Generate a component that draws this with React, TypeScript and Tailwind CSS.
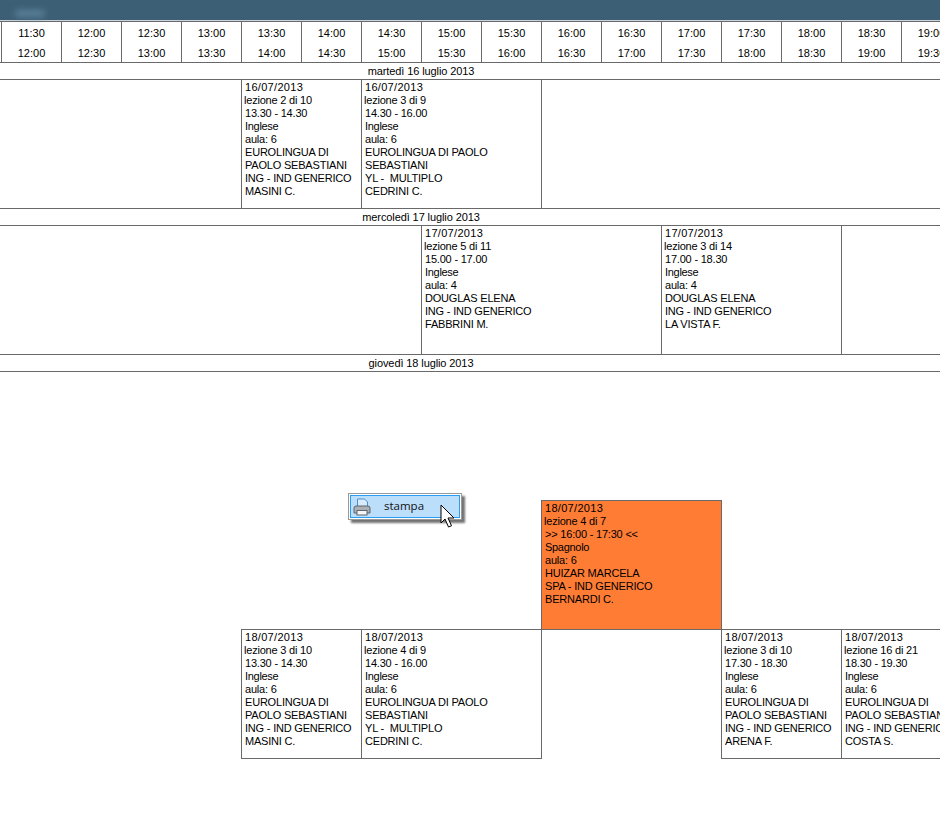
const font = { fontFamily: '"Liberation Sans", Arial, sans-serif' };

const hours = ["11:30","12:00","12:30","13:00","13:30","14:00","14:30","15:00","15:30","16:00","16:30","17:00","17:30","18:00","18:30","19:00"];
const ends = ["12:00","12:30","13:00","13:30","14:00","14:30","15:00","15:30","16:00","16:30","17:00","17:30","18:00","18:30","19:00","19:30"];

function Lines({ lines }: { lines: string[] }) {
  return (
    <>
      {lines.map((l, i) => (
        <div key={i} className={i === 0 ? "tracking-[0.3px]" : i === 1 ? "-ml-px tracking-[-0.2px]" : i === 3 ? "tracking-[-0.3px]" : "tracking-[-0.2px]"}>
          {l}
        </div>
      ))}
    </>
  );
}

function Cell({ w, lines }: { w: string; lines: string[] }) {
  return (
    <div className={`${w} shrink-0 border-l border-[#696969] pl-[3px] pt-px text-[11px] leading-[13px] text-black whitespace-pre`}>
      <Lines lines={lines} />
    </div>
  );
}

function DayLabel({ text }: { text: string }) {
  return (
    <div className="h-[17px] border-b border-[#696969] text-[11px] leading-[17px] text-black">
      <div className="w-[842px] text-center tracking-[-0.1px]">{text}</div>
    </div>
  );
}

export default function App() {
  return (
    <div className="w-[940px] h-[829px] overflow-hidden bg-white relative" style={font}>
      <div className="h-[20px] bg-[#3d5f75] relative">
        <div className="absolute left-[15px] top-[10px] w-[30px] h-[7px] rounded-full bg-[#5a8199] blur-[3px]" />
      </div>
      <div className="h-px bg-[#c9d3d9]" />
      <div className="flex h-[42px] border-t border-b border-[#696969] pl-px">
        {hours.map((h, i) => (
          <div key={h} className="w-[60px] shrink-0 border-l border-[#696969] text-center text-[11px] text-black flex flex-col pt-px">
            <div className="h-[20px] leading-[20px]">{h}</div>
            <div className="h-[20px] leading-[20px]">{ends[i]}</div>
          </div>
        ))}
      </div>
      <DayLabel text="martedì 16 luglio 2013" />
      <div className="flex h-[129px] border-b border-[#696969] pl-[241px]">
        <Cell w="w-[120px]" lines={["16/07/2013","lezione 2 di 10","13.30 - 14.30","Inglese","aula: 6","EUROLINGUA DI","PAOLO SEBASTIANI","ING - IND GENERICO","MASINI C."]} />
        <Cell w="w-[180px]" lines={["16/07/2013","lezione 3 di 9","14.30 - 16.00","Inglese","aula: 6","EUROLINGUA DI PAOLO","SEBASTIANI","YL -  MULTIPLO","CEDRINI C."]} />
        <div className="border-l border-[#696969]" />
      </div>
      <DayLabel text="mercoledì 17 luglio 2013" />
      <div className="flex h-[129px] border-b border-[#696969] pl-[421px]">
        <Cell w="w-[240px]" lines={["17/07/2013","lezione 5 di 11","15.00 - 17.00","Inglese","aula: 4","DOUGLAS ELENA","ING - IND GENERICO","FABBRINI M."]} />
        <Cell w="w-[180px]" lines={["17/07/2013","lezione 3 di 14","17.00 - 18.30","Inglese","aula: 4","DOUGLAS ELENA","ING - IND GENERICO","LA VISTA F."]} />
        <div className="border-l border-[#696969]" />
      </div>
      <DayLabel text="giovedì 18 luglio 2013" />
      <div className="h-[128px]" />
      <div className="flex h-[129px] pl-[541px]">
        <div className="w-[181px] shrink-0 border-x border-t border-[#696969] bg-[#ff7c35] pl-[3px] pt-px text-[11px] leading-[13px] text-black whitespace-pre">
          <Lines lines={["18/07/2013","lezione 4 di 7",">> 16:00 - 17:30 <<","Spagnolo","aula: 6","HUIZAR MARCELA","SPA - IND GENERICO","BERNARDI C."]} />
        </div>
      </div>
      <div className="flex h-[130px] pl-[241px]">
        <Cell w="w-[120px] border-t border-b" lines={["18/07/2013","lezione 3 di 10","13.30 - 14.30","Inglese","aula: 6","EUROLINGUA DI","PAOLO SEBASTIANI","ING - IND GENERICO","MASINI C."]} />
        <Cell w="w-[180px] border-t border-b" lines={["18/07/2013","lezione 4 di 9","14.30 - 16.00","Inglese","aula: 6","EUROLINGUA DI PAOLO","SEBASTIANI","YL -  MULTIPLO","CEDRINI C."]} />
        <div className="w-[180px] shrink-0 border-l border-t border-[#696969]" />
        <Cell w="w-[120px] border-t border-b" lines={["18/07/2013","lezione 3 di 10","17.30 - 18.30","Inglese","aula: 6","EUROLINGUA DI","PAOLO SEBASTIANI","ING - IND GENERICO","ARENA F."]} />
        <Cell w="w-[120px] border-t border-b" lines={["18/07/2013","lezione 16 di 21","18.30 - 19.30","Inglese","aula: 6","EUROLINGUA DI","PAOLO SEBASTIANI","ING - IND GENERICO","COSTA S."]} />
      </div>

      <div className="absolute left-[348px] top-[493px] w-[114px] h-[27px] border border-[#9a9a9a] bg-white p-px shadow-[3px_3px_2px_rgba(0,0,0,0.55)]">
        <div className="h-full border border-[#2a9df4] bg-[#bbdefb] relative">
          <svg width="18" height="18" viewBox="0 0 18 18" className="absolute left-[2px] top-[2px]">
            <path d="M4.5 1h7l3 3v5h-10z" fill="#d8ecfd" stroke="#4f8fd0" />
            <path d="M1 10q0-2 2-2h12q2 0 2 2v5H1z" fill="#aab0b6" stroke="#5f666d" />
            <rect x="4" y="12.5" width="10" height="4.5" fill="#f4f6f8" stroke="#5f666d" />
          </svg>
          <span className="absolute left-[33px] top-[1px] text-[11.5px] leading-[18px] font-medium text-[#111]" style={{ fontFamily: '"Open Sans", sans-serif' }}>stampa</span>
        </div>
      </div>
      <svg width="15" height="25" viewBox="0 0 15 25" className="absolute left-[440px] top-[504px]">
        <path d="M1 1v18l4-4 3.5 8 3-1.2L8 14h6z" fill="#fff" stroke="#000" strokeWidth="1" />
      </svg>
    </div>
  );
}
